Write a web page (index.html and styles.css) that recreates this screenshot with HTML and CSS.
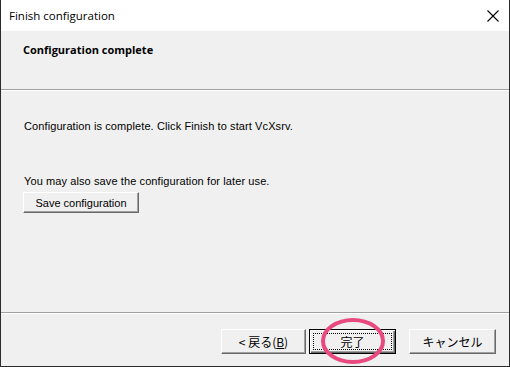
FILE: index.html
```html
<!DOCTYPE html>
<html lang="ja">
<head>
    <meta charset="UTF-8">
    <title>Finish configuration</title>
    <link rel="stylesheet" href="styles.css">
</head>
<body>
    <div class="window">
        <div class="titlebar">
            <span class="title">Finish configuration</span>
            <svg class="close" width="12" height="12" viewBox="0 0 12 12">
                <path d="M0.5 0.5 L11.5 11.5 M11.5 0.5 L0.5 11.5" stroke="#000" stroke-width="1.1" fill="none"/>
            </svg>
        </div>

        <div class="header">
            <div class="header-title">Configuration complete</div>
        </div>
        <div class="sep"></div>

        <div class="content">
            <p class="line first">Configuration is complete. Click Finish to start VcXsrv.</p>
            <p class="line second">You may also save the configuration for later use.</p>
            <button class="btn save">Save configuration</button>
        </div>
        <div class="sep"></div>

        <div class="footer">
            <button class="btn jp back">&lt; 戻る(<u>B</u>)</button>
            <div class="finish-wrap">
                <button class="btn jp default"><span class="focus">完了</span></button>
                <svg class="mark" width="70" height="52" viewBox="0 0 70 52">
                    <ellipse cx="35" cy="26" rx="30" ry="21" stroke="#e84a80" stroke-width="4" fill="none"/>
                </svg>
            </div>
            <button class="btn jp cancel">キャンセル</button>
        </div>
    </div>
</body>
</html>
```

FILE: styles.css
```css
body {
    margin: 0;
    background-color: #fff;
}

.window {
    width: 510px;
    height: 367px;
    box-sizing: border-box;
    border: 1px solid #2b2b2b;
    border-top: none;
    display: flex;
    flex-direction: column;
    background-color: #f0f0f0;
    font-family: "Liberation Sans", sans-serif;
}

.titlebar {
    height: 31px;
    flex: none;
    background-color: #fff;
    display: flex;
    align-items: center;
    justify-content: space-between;
    padding: 0 10px 0 8px;
}

.title {
    font-family: "Open Sans", "Noto Sans", sans-serif;
    font-size: 11.5px;
    color: #000;
}

.header {
    height: 58px;
    flex: none;
    box-sizing: border-box;
    padding: 11px 22px;
}

.header-title {
    font-family: "Open Sans", "Noto Sans", sans-serif;
    font-weight: bold;
    font-size: 11px;
    color: #000;
}

.sep {
    flex: none;
    border-top: 1px solid #a0a0a0;
    border-bottom: 1px solid #fff;
}

.content {
    flex: 1;
    padding: 29px 23px 0;
}

.line {
    margin: 0;
    font-size: 11px;
    color: #000;
    letter-spacing: 0.1px;
}

.line.second {
    margin-top: 43px;
}

.btn {
    box-sizing: border-box;
    background-color: #f0f0f0;
    border: 1px solid;
    border-color: #fff #696969 #696969 #fff;
    box-shadow: inset -1px -1px 0 #a0a0a0;
    font-family: "Liberation Sans", sans-serif;
    font-size: 11px;
    color: #000;
    padding: 0;
    margin: 0;
}

.save {
    display: block;
    margin: 5px 0 0 -1px;
    width: 116px;
    height: 21px;
}

.footer {
    height: 52px;
    flex: none;
    box-sizing: border-box;
    display: flex;
    align-items: flex-start;
    padding: 15px 0 0 220px;
}

.jp {
    font-family: "Noto Sans CJK JP", sans-serif;
    font-size: 12px;
    width: 85px;
    height: 25px;
}

.back {
    margin-right: 3px;
}

.finish-wrap {
    position: relative;
    margin-right: 13px;
}

.default {
    width: 87px;
    border: 1px solid #000;
    box-shadow: inset 1px 1px 0 #fff, inset -1px -1px 0 #696969, inset -2px -2px 0 #a0a0a0;
    padding: 3px;
    display: flex;
}

.focus {
    flex: 1;
    display: flex;
    align-items: center;
    justify-content: center;
    border: 1px dotted #000;
}

.mark {
    position: absolute;
    left: 9px;
    top: -14px;
}

.cancel {
    width: 87px;
}
```
